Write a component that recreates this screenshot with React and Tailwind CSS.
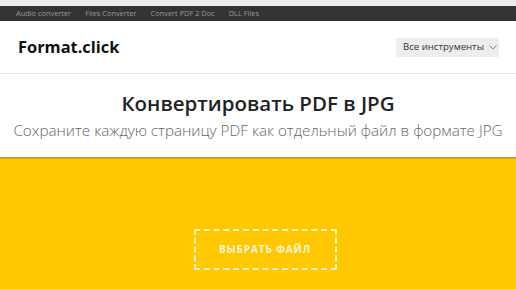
export default function App() {
  return (
    <div className="w-[516px] h-[289px] overflow-hidden bg-white" style={{ fontFamily: '"Open Sans", "Noto Sans", sans-serif' }}>
      <div className="h-[6px] bg-[#ececec]" />
      <div className="h-[15px] bg-[#333333] flex items-center gap-[14px] pl-[16px] text-[7.4px] text-[#9a9a9a] leading-none">
        <span>Audio converter</span>
        <span>Files Converter</span>
        <span>Convert PDF 2 Doc</span>
        <span>DLL Files</span>
      </div>
      <div className="h-[53px] flex items-center justify-between pl-[18px] pr-[17px] border-b border-[#e6e6e6]">
        <div className="text-[16.4px] font-bold text-[#111] mt-[1px]">Format.click</div>
        <div className="h-[19px] w-[103px] pl-[7px] bg-[#ededed] rounded-[2px] flex items-center gap-[5px] text-[9.6px] text-[#333]">
          <span>Все инструменты</span>
          <svg width="8" height="5" viewBox="0 0 8 5" fill="none"><path d="M0.5 0.5 L4 4 L7.5 0.5" stroke="#777" strokeWidth="0.9" /></svg>
        </div>
      </div>
      <div className="flex flex-col items-center pt-[16px] h-[83px]">
        <div className="text-[20.5px] font-semibold text-[#222] leading-[26px]">Конвертировать PDF в JPG</div>
        <div className="text-[15.25px] font-light text-[#666] leading-[20px] mt-[4px] whitespace-nowrap">Сохраните каждую страницу PDF как отдельный файл в формате JPG</div>
      </div>
      <div className="h-[132px] bg-[#ffc800] border-t-2 border-[#caa21a] flex justify-center pt-[70px] pl-[14px]">
        <div className="w-[143px] h-[41px] border-2 border-dashed border-[#fff3c4] rounded-[2px] flex items-center justify-center text-[10px] font-bold tracking-[0.9px] text-[#fff6d8]">
          ВЫБРАТЬ ФАЙЛ
        </div>
      </div>
    </div>
  );
}
